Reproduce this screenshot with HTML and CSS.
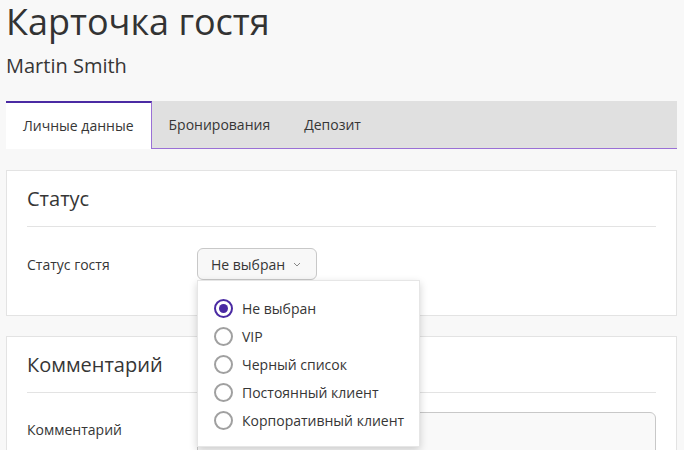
FILE: index.html
```html
<!DOCTYPE html>
<html lang="ru">
<head>
  <meta charset="UTF-8">
  <meta name="viewport" content="width=device-width, initial-scale=1.0">
  <title>Карточка гостя</title>
  <link rel="stylesheet" href="styles.css">
</head>
<body>
  <h1>Карточка гостя</h1>
  <div class="guest-name">Martin Smith</div>

  <div class="tabs">
    <div class="tab active">Личные данные</div>
    <div class="tab">Бронирования</div>
    <div class="tab">Депозит</div>
  </div>

  <div class="card">
    <div class="card-title">Статус</div>
    <div class="row">
      <div class="label">Статус гостя</div>
      <div class="select">
        <button type="button" class="select-btn">Не выбран
          <svg class="chevron" width="8" height="5" viewBox="0 0 8 5"><path d="M1 1l3 3 3-3" fill="none" stroke="#888" stroke-width="1"/></svg>
        </button>
        <div class="menu">
          <div class="option"><span class="radio checked"></span>Не выбран</div>
          <div class="option"><span class="radio"></span>VIP</div>
          <div class="option"><span class="radio"></span>Черный список</div>
          <div class="option"><span class="radio"></span>Постоянный клиент</div>
          <div class="option"><span class="radio"></span>Корпоративный клиент</div>
        </div>
      </div>
    </div>
  </div>

  <div class="card">
    <div class="card-title">Комментарий</div>
    <div class="row comment-row">
      <div class="label">Комментарий</div>
      <textarea class="comment"></textarea>
    </div>
  </div>
</body>
</html>
```

FILE: styles.css
```css
body {
  font-family: "Open Sans", "Liberation Sans", sans-serif;
  margin: 0;
  padding: 0 7px 0 6px;
  background: #f8f8f8;
  color: #363636;
  overflow: hidden;
}
h1 {
  margin: 0;
  font-size: 36px;
  font-weight: 400;
  line-height: 44px;
  color: #333;
}
.guest-name {
  margin-top: 8px;
  font-size: 20px;
  line-height: 27px;
}
.tabs {
  display: flex;
  margin-top: 22px;
  height: 47px;
  background: #e0e0e0;
  border-bottom: 1px solid #9a70d6;
}
.tab {
  display: flex;
  align-items: center;
  padding: 0 17px;
  font-size: 14px;
}
.tab.active {
  background: #fff;
  border-top: 2px solid #4a2aa3;
  border-right: 1px solid #9a70d6;
  margin-bottom: -1px;
  padding-bottom: 1px;
}
.card {
  margin-top: 21px;
  background: #fff;
  border: 1px solid #e3e3e3;
  padding: 0 20px 35px;
}
.card + .card {
  margin-top: 20px;
}
.card-title {
  padding: 14px 0 13px;
  font-size: 20px;
  line-height: 28px;
  border-bottom: 1px solid #e3e3e3;
}
.row {
  display: flex;
  align-items: center;
  margin-top: 21px;
}
.label {
  width: 170px;
  flex: none;
  font-size: 14px;
}
.comment-row {
  align-items: flex-start;
  margin-top: 19px;
}
.comment-row .label {
  padding-top: 8px;
}
.select {
  position: relative;
}
.select-btn {
  display: flex;
  align-items: center;
  gap: 8px;
  height: 32px;
  padding: 0 15px 0 13px;
  font-family: inherit;
  font-size: 14px;
  color: #363636;
  background: #f8f8f8;
  border: 1px solid #c8c8c8;
  border-radius: 6px;
}
.chevron {
  margin-top: 1px;
}
.menu {
  position: absolute;
  top: 32px;
  left: 0;
  width: 223px;
  padding: 13px 0 12px;
  background: #fff;
  border: 1px solid #e6e6e6;
  box-sizing: border-box;
  box-shadow: 0 3px 8px rgba(0, 0, 0, 0.18);
  z-index: 2;
}
.option {
  display: flex;
  align-items: center;
  height: 28px;
  padding-left: 16px;
  font-size: 14px;
}
.radio {
  width: 19px;
  height: 19px;
  box-sizing: border-box;
  border: 2px solid #a0a0a0;
  border-radius: 50%;
  margin-right: 9px;
  position: relative;
}
.radio.checked {
  border-color: #4a2aa3;
}
.radio.checked::after {
  content: "";
  position: absolute;
  left: 3px;
  top: 3px;
  width: 9px;
  height: 9px;
  border-radius: 50%;
  background: #4a2aa3;
}
.comment {
  flex: 1;
  height: 80px;
  background: #f9f9f9;
  border: 1px solid #c8c8c8;
  border-radius: 6px;
  resize: none;
}
```
